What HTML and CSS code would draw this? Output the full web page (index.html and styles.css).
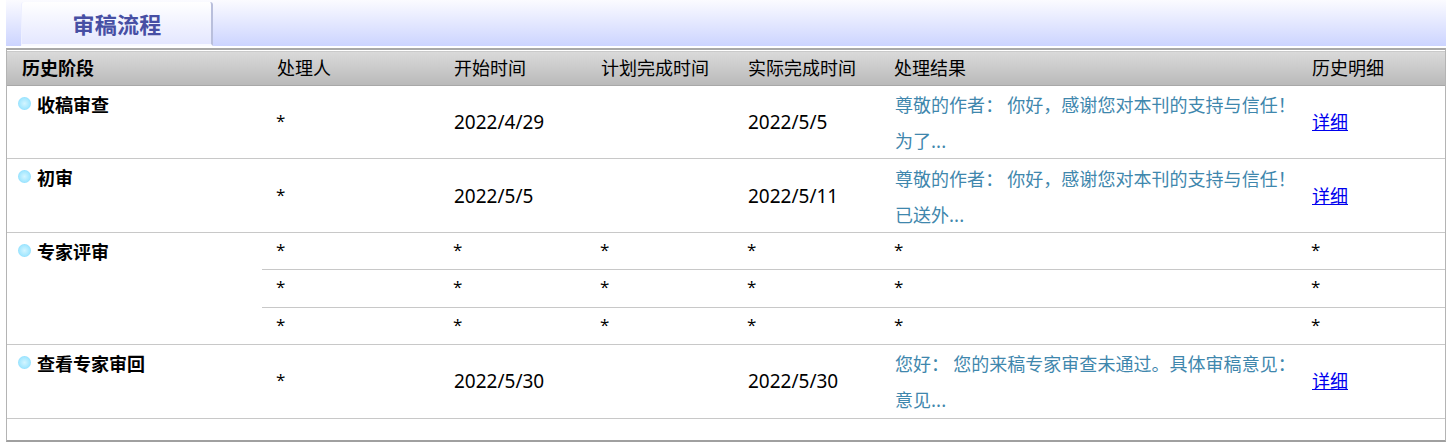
FILE: index.html
```html
<!DOCTYPE html>
<html lang="zh">
<head>
<meta charset="utf-8">
<title>审稿流程</title>
<link rel="stylesheet" href="styles.css">
</head>
<body>
<div class="tabbar"><div class="tab">审稿流程</div></div>
<div class="frame">
<table class="flow">
<colgroup><col class="c1"><col class="c2"><col class="c3"><col class="c4"><col class="c5"><col class="c6"><col class="c7"></colgroup>
<thead>
<tr><th class="stage-head">历史阶段</th><th>处理人</th><th>开始时间</th><th>计划完成时间</th><th>实际完成时间</th><th class="result-head">处理结果</th><th>历史明细</th></tr>
</thead>
<tbody>
<tr class="tall first">
<td class="stage"><span class="dot"></span>收稿审查</td><td class="star">*</td><td class="date">2022/4/29</td><td></td><td class="date">2022/5/5</td>
<td class="result">尊敬的作者： 你好，感谢您对本刊的支持与信任！<br>为了...</td><td class="detail"><a href="#">详细</a></td>
</tr>
<tr class="tall">
<td class="stage"><span class="dot"></span>初审</td><td class="star">*</td><td class="date">2022/5/5</td><td></td><td class="date">2022/5/11</td>
<td class="result">尊敬的作者： 你好，感谢您对本刊的支持与信任！<br>已送外...</td><td class="detail"><a href="#">详细</a></td>
</tr>
<tr class="short">
<td class="stage" rowspan="3"><span class="dot"></span>专家评审</td><td class="star">*</td><td class="star">*</td><td class="star">*</td><td class="star">*</td><td class="star">*</td><td class="star">*</td>
</tr>
<tr class="short"><td class="star">*</td><td class="star">*</td><td class="star">*</td><td class="star">*</td><td class="star">*</td><td class="star">*</td></tr>
<tr class="short"><td class="star">*</td><td class="star">*</td><td class="star">*</td><td class="star">*</td><td class="star">*</td><td class="star">*</td></tr>
<tr class="tall">
<td class="stage"><span class="dot"></span>查看专家审回</td><td class="star">*</td><td class="date">2022/5/30</td><td></td><td class="date">2022/5/30</td>
<td class="result">您好： 您的来稿专家审查未通过。具体审稿意见：<br>意见...</td><td class="detail"><a href="#">详细</a></td>
</tr>
<tr class="empty"><td colspan="7"></td></tr>
</tbody>
</table>
</div>
</body>
</html>
```
FILE: styles.css
```css
html, body { margin: 0; padding: 0; background: #fff; }
body { font-family: "Noto Sans CJK SC", "Noto Sans", sans-serif; color: #000; font-size: 18px; overflow: hidden; }
.tabbar { height: 46px; margin: 0 4px 0 6px; background: linear-gradient(#fbfbff, #ccd4ff); display: flex; align-items: flex-end; padding-left: 15px; box-sizing: border-box; }
.tab { width: 192px; height: 44px; box-sizing: border-box; border-right: 2px solid #b9bfdc; border-left: 1px solid #eef0ff; border-bottom: 2px solid #f8f9ff; border-radius: 3px 3px 0 0; background: linear-gradient(#ffffff, #e4e7ff); color: #474fa4; font-size: 22px; letter-spacing: .25px; font-weight: 700; line-height: 42px; text-align: center; padding-left: 1px; }
.frame { margin: 2px 4px 0 6px; border: 1px solid #b4b4b4; border-top: 2px solid #a8a8a8; border-bottom: 2px solid #a0a0a0; height: 394px; box-sizing: border-box; }
.flow { width: 100%; border-collapse: collapse; table-layout: fixed; }
.c1 { width: 255px; } .c2 { width: 177px; } .c3, .c4, .c5 { width: 147px; } .c6 { width: 417px; }
.flow th { height: 35px; box-sizing: border-box; padding: 0 0 2px 15px; border-top: 1px solid #fff; border-bottom: 1px solid #a8a8a8; background: linear-gradient(#dadada, #b9b9b9); font-weight: 400; text-align: left; line-height: 26px; }
.flow th.stage-head { font-weight: 700; }
.flow th.result-head { padding-left: 14px; }
.flow td { box-sizing: border-box; padding: 0 0 0 15px; border-bottom: 1px solid #c8c8c8; vertical-align: middle; line-height: 26px; }
.tall td { height: 74px; }
.first td { height: 73px; }
.short td { height: 37.33px; }
.empty td { height: 22px; border-bottom: 0; }
.flow td.stage { vertical-align: top; padding: 4px 0 0 11px; font-weight: 700; line-height: 28px; }
.dot { display: inline-block; width: 13px; height: 13px; margin-right: 6px; border-radius: 50%; background: radial-gradient(circle, #d4f5ff 0, #a6e8ff 55%, #6fd0fb 100%); vertical-align: 2px; }
.flow td.result { color: #3f87ad; line-height: 36px; white-space: nowrap; padding-left: 15px; letter-spacing: .03px; }
.flow td.date { font-family: "Noto Sans", sans-serif; font-size: 19px; }
.flow td.detail { padding-bottom: 2px; }
.flow td.star { font-family: "Open Sans", sans-serif; font-size: 17px; padding-left: 14px; }
.short .star { padding-bottom: 2px; }
.tall .star { padding-bottom: 2px; }
a { color: #00e; }
```
